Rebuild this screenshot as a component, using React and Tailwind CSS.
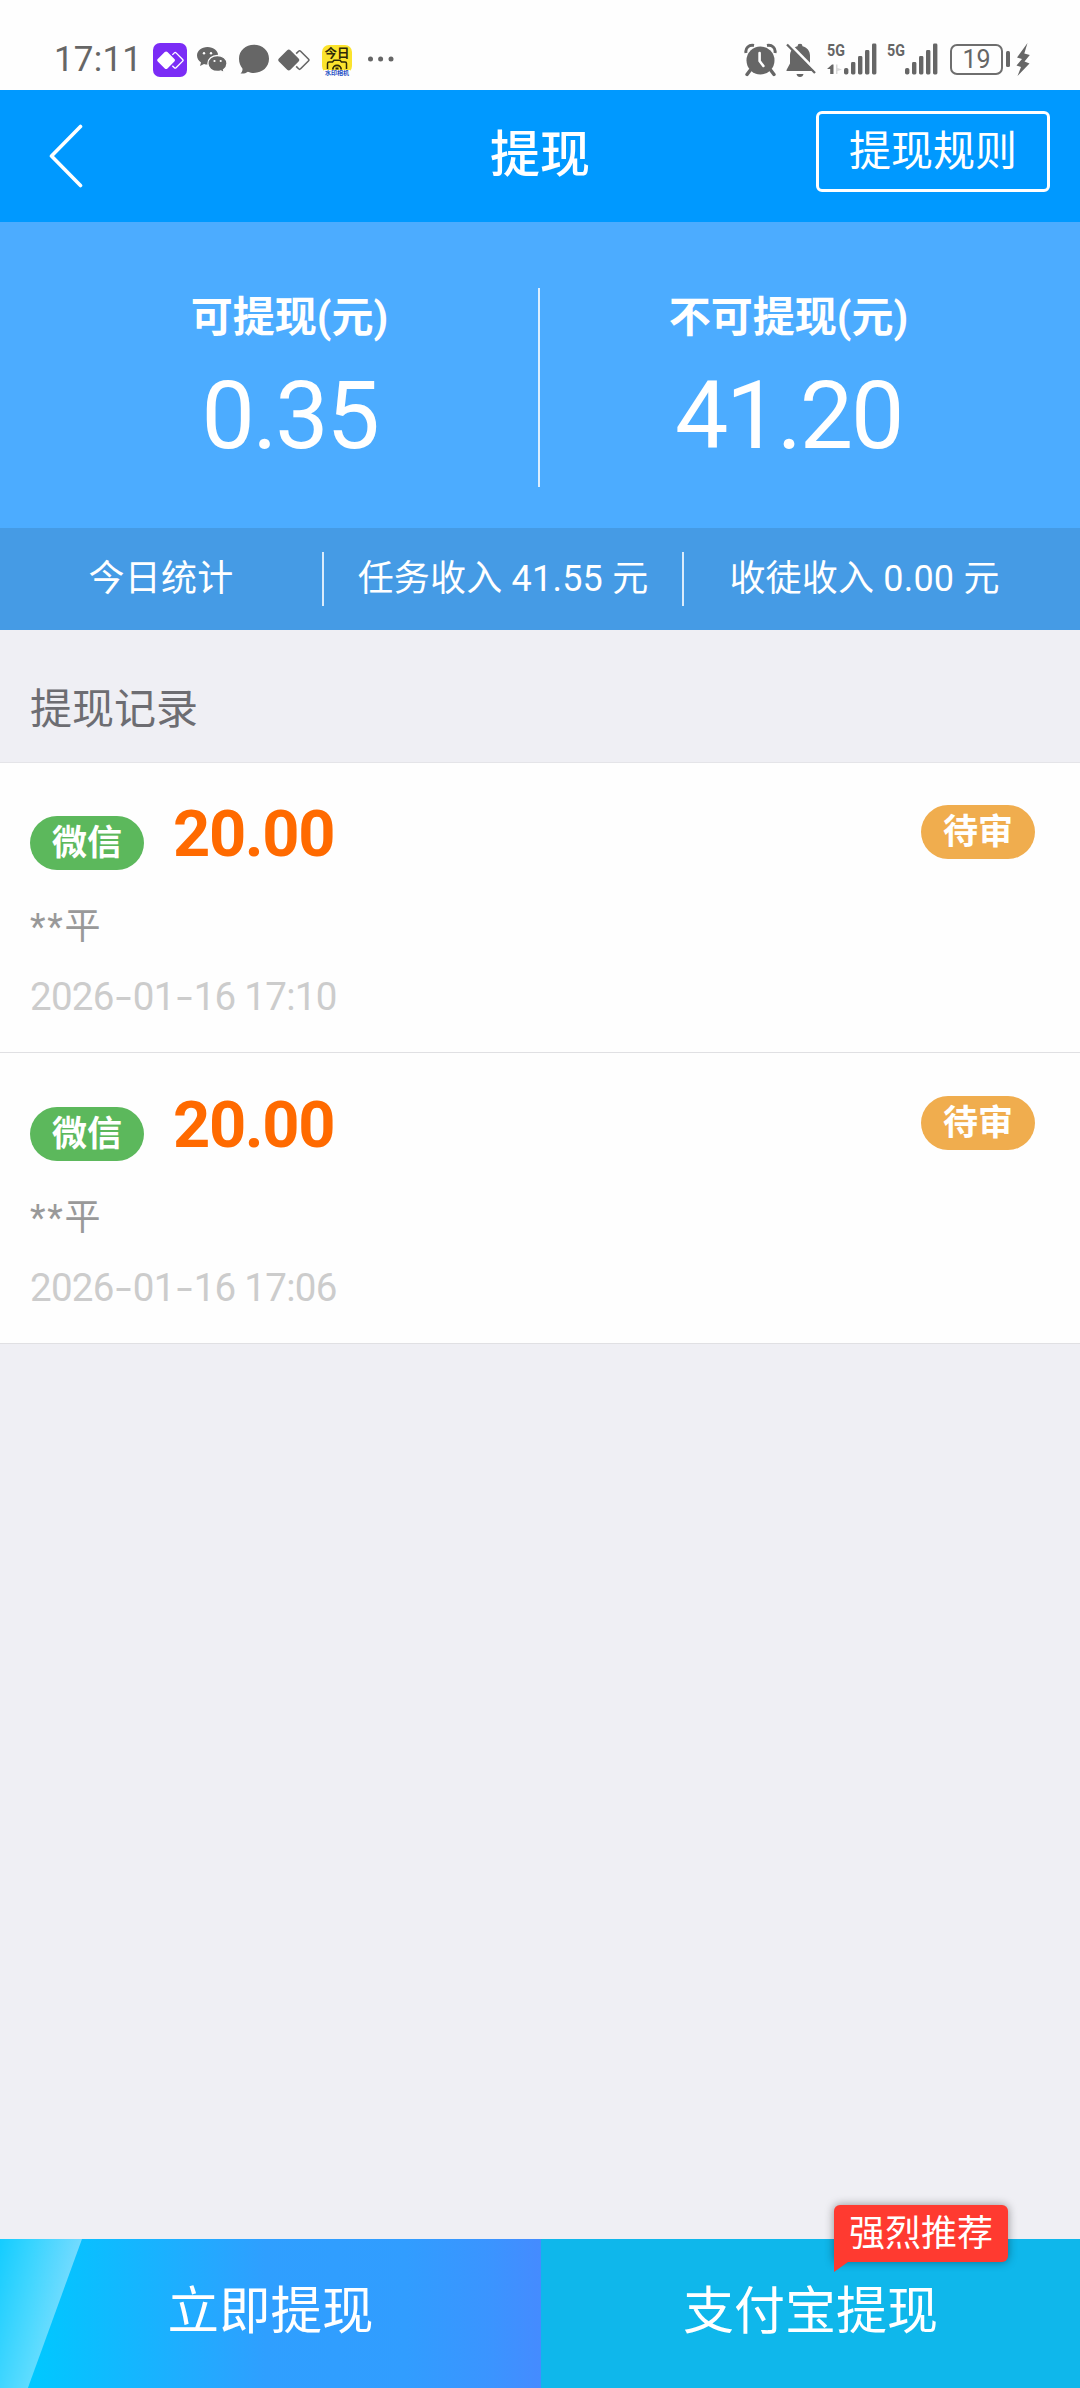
import React from "react";

function SignalBars({ className }) {
  return (
    <svg className={className} width="34" height="32" viewBox="0 0 34 32" fill="#666">
      <rect x="1" y="25" width="4.4" height="6.5" rx="1.8" />
      <rect x="8" y="19" width="4.4" height="12.5" rx="1.4" />
      <rect x="15" y="13" width="4.4" height="18.5" rx="1.4" />
      <rect x="22" y="7" width="4.4" height="24.5" rx="1.4" />
      <rect x="29" y="0.6" width="4.4" height="30.9" rx="1.4" />
    </svg>
  );
}

function Diamonds({ className, color, size }) {
  return (
    <svg className={className} width={size} height={(size * 22) / 32} viewBox="0 0 32 22">
      <path d="M18.200 4.600 20.600 2.200Q21.600 1.200 22.600 2.200L30.400 10Q31.400 11 30.400 12L22.600 19.800Q21.600 20.800 20.600 19.800L18.200 17.400" fill="none" stroke={color} strokeWidth="1.600" />
      <path d="M9.200 1.200Q10.800-.2 12.400 1.200L20.600 9.600Q22 11 20.600 12.400L12.400 20.800Q10.800 22.200 9.200 20.800L.9 12.400Q-.5 11 .9 9.600Z" fill={color} />
    </svg>
  );
}

function NetworkLabel() {
  return (
    <span className="block h-[16px] w-[20px] origin-left scale-x-[0.84] text-[17px] font-bold leading-[15px]">5G</span>
  );
}

function StatusBar() {
  return (
    <div className="flex h-[90px] shrink-0 items-start bg-[#fefefe] text-[#666]">
      <span className="ml-[54px] mt-[39px] w-[99px] text-[35px] leading-[42px] tracking-[0.2px]">17:11</span>
      <span className="mt-[43px] flex h-[34px] w-[34px] items-center justify-center rounded-[7px] bg-[#7b2cf6]">
        <Diamonds color="#fff" size={27} />
      </span>
      <svg className="ml-[9px] mt-[46px]" width="32" height="28" viewBox="0 0 32 28">
        <path d="M11.5 1C5.500 1 1 4.800 1 9.600c0 2.900 1.600 5.200 4 6.800L4 20l4-2.100c1.200.4 2.300.5 3.800.5 6 0 10.400-3.900 10.400-8.800C22.200 4.800 17.500 1 11.500 1Z" fill="#666" />
        <path d="M21.400 9.500c-5.400 0-9.500 3.600-9.500 8s4.100 8 9.500 8c1.300 0 2.400-.2 3.500-.6l3.500 2-.9-3.200c2.100-1.500 3.500-3.700 3.500-6.200 0-4.400-4.200-8-9.600-8Z" fill="#666" stroke="#fefefe" strokeWidth="1.300" />
        <g fill="#fefefe">
          <circle cx="8" cy="7.200" r="1.200" />
          <circle cx="15" cy="7.200" r="1.200" />
          <circle cx="18.500" cy="15" r="1.100" />
          <circle cx="24.700" cy="15" r="1.100" />
        </g>
      </svg>
      <svg className="ml-[10px] mt-[44px]" width="32" height="32" viewBox="0 0 32 32" fill="#666">
        <path d="M16 .8C7.600.8 1 6.600 1 14.800c0 4.300 1.500 7.300 3.400 9.600.5 2-.6 3.600-1.900 5.100 3 .4 5.200-.3 7.400-1.800 2 .9 3.900 1.200 6.100 1.200 8.400 0 15-5.900 15-14.100S24.400.8 16 .8Z" />
      </svg>
      <Diamonds className="ml-[8px] mt-[49px]" color="#666" size={32} />
      <svg className="ml-[12px] mt-[45px]" width="30" height="31" viewBox="0 0 30 31">
        <rect width="30" height="28" rx="7" fill="#fbe32d" />
        <path d="M2 25h26v5.500H2Z" fill="#fefefe" />
        <text x="15" y="13" textAnchor="middle" fontSize="12.500" fontWeight="700" fill="#2f2a08">今日</text>
        <path d="M5.500 24v-5.500q0-1.500 1.500-1.500h3.500l1.500-1.800h6l1.500 1.800H23q1.500 0 1.500 1.500V24" fill="none" stroke="#2f2a08" strokeWidth="1.500" />
        <path d="M10.800 24.500a4.200 4.200 0 0 1 8.400 0" fill="none" stroke="#2f2a08" strokeWidth="1.800" />
        <path d="M13.500 22.500h3v2h-3Z" fill="#2f2a08" />
        <text x="15" y="30.200" textAnchor="middle" fontSize="6" fontWeight="700" fill="#1f4fc4">水印相机</text>
      </svg>
      <svg className="ml-[15px] mt-[56px]" width="28" height="6" viewBox="0 0 28 6" fill="#666">
        <circle cx="3.500" cy="3" r="2.500" />
        <circle cx="13.600" cy="3" r="2.500" />
        <circle cx="24" cy="3" r="2.500" />
      </svg>

      <svg className="ml-auto mt-[43px]" width="34" height="34" viewBox="0 0 34 34" fill="#666">
        <circle cx="16.500" cy="17.500" r="14" />
        <path d="M2 10C1 5 5 1.500 10 2.500M31 10C32 5 28 1.500 23 2.500" fill="none" stroke="#666" strokeWidth="3" />
        <path d="M6 27.500 3 31.500M27 27.500l3 4" stroke="#666" strokeWidth="3.400" strokeLinecap="round" />
        <path d="M15.600 10v8l3.800 5" fill="none" stroke="#fefefe" strokeWidth="2.600" strokeLinecap="round" strokeLinejoin="round" />
      </svg>
      <svg className="ml-[8px] mt-[43px]" width="30" height="35" viewBox="0 0 30 35">
        <path d="M11.500 3.200q0-2.400 2.500-2.400t2.500 2.400c4.500 1.200 7.500 4.700 7.500 9.300v8l4 6.500v1H.5v-1L4 20.500v-8c0-4.600 3-8.100 7.500-9.300ZM10.500 31h7q-.6 3-3.500 3t-3.500-3Z" fill="#666" />
        <path d="M2.500 0 31 29" stroke="#fefefe" strokeWidth="3" />
        <path d="M1 1.500 29 30" stroke="#666" strokeWidth="2.300" />
      </svg>
      <div className="ml-[11px] mt-[43px] w-[20px]">
        <NetworkLabel />
        <svg width="16" height="16" viewBox="0 0 16 16" fill="#666">
          <path d="M0 10 5 5.500h1.500V15H3.200v-5Z" />
          <path d="M9 5.500h1.500v3.500l4.500 1.500-4.500 1.500v3H9Z" fill="#d8d8d8" />
        </svg>
      </div>
      <SignalBars className="ml-[-4px] mt-[43px]" />
      <div className="ml-[10px] mt-[43px] w-[18px]">
        <NetworkLabel />
      </div>
      <SignalBars className="ml-[-1px] mt-[43px]" />
      <span className="ml-[12px] mt-[44px] flex h-[31px] w-[53px] items-center justify-center rounded-[7px] border-2 border-[#6e6e6e] text-[25px] leading-none">
        19
      </span>
      <span className="ml-[3px] mt-[51px] h-[16px] w-[4px] rounded-[1.5px] bg-[#666]" />
      <svg className="ml-[6px] mr-[50px] mt-[43px]" width="14" height="34" viewBox="0 0 14 34" fill="#666">
        <path d="M11.500 0 1 14.500l5 1.500-5.500 6.500 4.500 1.500L1.500 33 13.500 20.500 8.500 18.500 13.800 12 8.300 10.500Z" />
      </svg>
    </div>
  );
}

function Header() {
  return (
    <header className="grid h-[132px] shrink-0 grid-cols-3 items-center bg-[#0099ff] text-white">
      <svg className="ml-[48px]" width="36" height="64" viewBox="0 0 36 64" fill="none" stroke="#fff" strokeWidth="3.600" strokeLinecap="round" strokeLinejoin="round">
        <path d="M32.500 2.500 3.500 32l29 29.500" />
      </svg>
      <h1 className="pb-[3px] text-center text-[50px] font-medium leading-[60px]">提现</h1>
      <button className="mb-[9px] mr-[30px] h-[81px] w-[234px] justify-self-end rounded-[6px] border-[3px] border-white text-[42px] leading-[74px]">
        提现规则
      </button>
    </header>
  );
}

function Balance({ label, value }) {
  return (
    <div className="flex-1 text-center">
      <div className="text-[42px] font-bold leading-[60px]">{label}</div>
      <div className="mt-[20px] text-[95px] leading-[96px] tracking-[-2.300px]">{value}</div>
    </div>
  );
}

function Pill({ className, children }) {
  return (
    <span className={"h-[54px] w-[114px] rounded-full text-center text-[35px] font-bold leading-[55px] text-white " + className}>
      {children}
    </span>
  );
}

function Dash() {
  return <span className="inline-block w-[19px] origin-center scale-x-150 text-center tracking-normal">-</span>;
}

function Record({ time }) {
  return (
    <li className="flex h-[291px] items-start justify-between border-b border-[#e0e0e3] pl-[30px] pr-[45px]">
      <div className="pt-[40px]">
        <div className="flex items-start">
          <Pill className="mt-[14px] bg-[#5cb85c]">微信</Pill>
          <span className="ml-[29px] text-[65px] font-bold leading-[64px] tracking-[-1.400px] text-[#ff6a00]">20.00</span>
        </div>
        <div className="mt-[32px] text-[36px] leading-[50px] text-[#999]">
          <span className="tracking-[1.800px]">**</span>平
        </div>
        <div className="mt-[20px] text-[38.500px] leading-[50px] tracking-[-0.700px] text-[#ccc]">
          2026<Dash />01<Dash />16 {time}
        </div>
      </div>
      <Pill className="mt-[43px] bg-[#f0ad4e]">待审</Pill>
    </li>
  );
}

export default function App() {
  return (
    <div className="flex h-[2388px] w-[1080px] flex-col overflow-hidden bg-[#efeff4] font-['Roboto','Noto_Sans_CJK_SC',sans-serif]">
      <StatusBar />
      <Header />

      <section className="flex h-[306px] shrink-0 bg-[#4cacff] pl-[41px] pr-[43px] pt-[66px] text-white">
        <Balance label="可提现(元)" value="0.35" />
        <div className="h-[199px] w-[2px] bg-white/80" />
        <Balance label="不可提现(元)" value="41.20" />
      </section>

      <section className="flex h-[102px] shrink-0 items-center bg-[#459be5] pr-[35px] text-center text-[36px] leading-[54px] tracking-[0.200px] text-white">
        <div className="w-[322px]">今日统计</div>
        <div className="w-[360px] border-l-2 border-white/80">任务收入 41.55 元</div>
        <div className="flex-1 border-l-2 border-white/80">收徒收入 0.00 元</div>
      </section>

      <h2 className="h-[132px] shrink-0 pl-[30px] pt-[50px] text-[42px] leading-[60px] text-[#6d6d72]">提现记录</h2>

      <div className="flex-1">
        <ul className="bg-[#fefefe] shadow-[inset_0_1px_0_#e4e4e8]">
          <Record time="17:10" />
          <Record time="17:06" />
        </ul>
      </div>

      <footer className="flex h-[149px] shrink-0 text-center text-[51.500px] leading-[145px] text-white">
        <button className="relative flex w-[541px] justify-center bg-[linear-gradient(90deg,#00c8ff_0%,#00c8ff_6%,#2f9fff_49%,#319dff_75%,#3b94ff_91%,#458bff_100%)]">
          <span className="absolute left-0 top-0 h-full w-[82px] bg-[linear-gradient(105deg,rgba(255,255,255,0.08),rgba(255,255,255,0.6))] [clip-path:polygon(0_0,100%_0,34%_100%,0_100%)]" />
          立即提现
        </button>
        <button className="relative flex flex-1 justify-center bg-[#0fb7eb] text-[51px]">
          支付宝提现
          <span className="absolute left-[293px] top-[-34px] h-[57px] w-[174px] rounded-[6px] rounded-bl-none bg-[#ff3a30] text-[36px] leading-[59px] shadow-[0_0_10px_rgba(0,0,0,0.4)]">
            强烈推荐
            <span className="absolute left-0 top-full h-[10px] w-[14px] bg-[#ff3a30] [clip-path:polygon(0_0,100%_0,0_100%)]" />
          </span>
        </button>
      </footer>
    </div>
  );
}
